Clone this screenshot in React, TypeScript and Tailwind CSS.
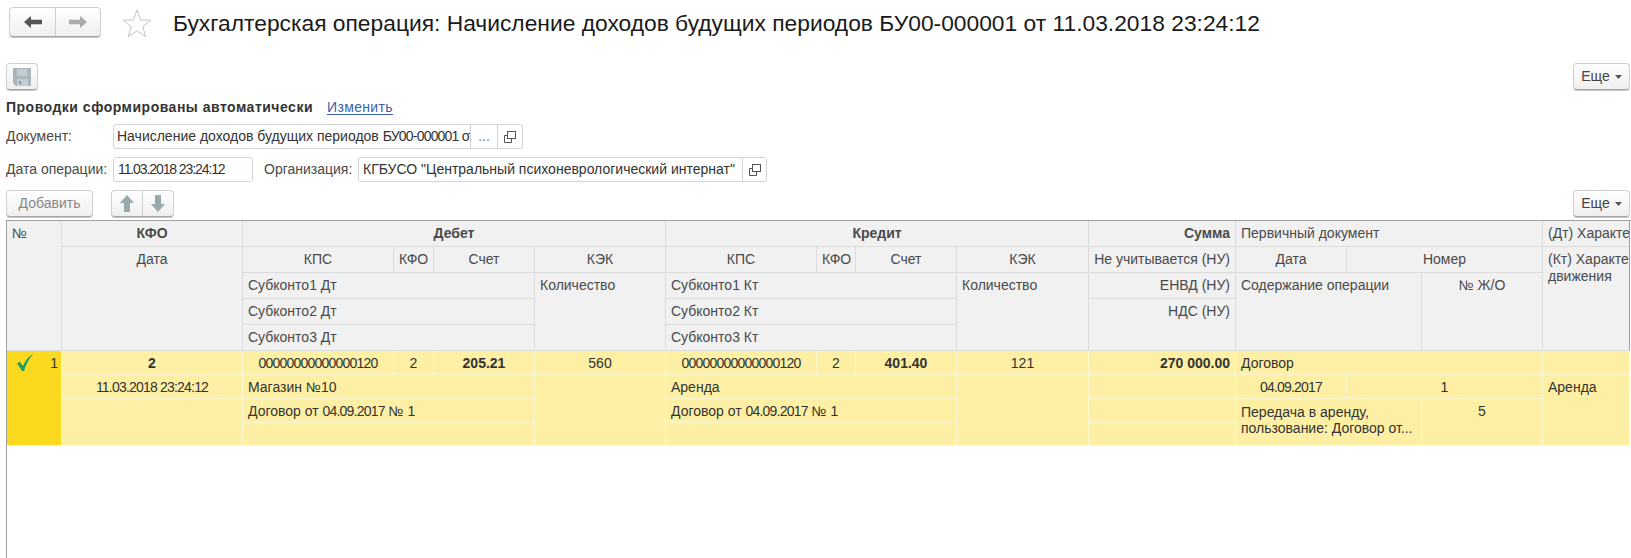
const btn = "bg-gradient-to-b from-white to-[#efefef] border border-[#d0d0d0] border-b-[#a8a8a8] rounded-[4px] shadow-[0_1px_0_#c4c4c4]";
const field = "h-[25px] bg-white border border-[#d4d4d4] rounded-[3px] flex items-center text-[#333] whitespace-nowrap overflow-hidden";
const digits = "tracking-[-0.8px]";

const Cell = ({ className, children }: { className: string; children?: React.ReactNode }) => (
  <div className={`bg-[#f1f1f1] border-r border-b border-[#dcdcdc] px-[5px] pt-[2px] leading-[20px] overflow-hidden whitespace-nowrap text-[#4a4a4a] ${className}`}>{children}</div>
);

const Data = ({ className, children }: { className: string; children?: React.ReactNode }) => (
  <div className={`bg-[#fdf0a4] border-r border-b border-[#fff8d2] px-[5px] pt-[2px] leading-[20px] overflow-hidden whitespace-nowrap text-[#333] ${className}`}>{children}</div>
);

const CopyIcon = () => (
  <svg width="14" height="14" viewBox="0 0 14 14" fill="none" stroke="#555" strokeWidth="1">
    <rect x="4.5" y="1.5" width="8" height="7" />
    <path d="M4.5 5.5H1.5V12.5H8.5V8.5" />
  </svg>
);

const Caret = () => (
  <svg width="7" height="4" viewBox="0 0 7 4"><path d="M0 0H7L3.5 4Z" fill="#555" /></svg>
);

const More = () => (
  <button className={`${btn} w-[57px] h-[27px] flex items-center justify-center gap-[5px] text-[14px] text-[#444]`}>
    Еще <Caret />
  </button>
);

export default function App() {
  return (
    <div className="h-[558px] w-[1631px] overflow-hidden bg-white flex flex-col font-['Liberation_Sans',Arial,sans-serif] text-[14px]">
      {/* Title bar */}
      <div className="h-[63px] shrink-0 flex items-start pt-[7px] pl-[9px]">
        <div className={`${btn} w-[92px] h-[30px] flex`}>
          <div className="w-[46px] border-r border-[#d0d0d0] flex items-center justify-center">
            <svg width="18" height="12" viewBox="0 0 18 12"><path d="M0 6L7 0V3.8H18V8.2H7V12Z" fill="#555" /></svg>
          </div>
          <div className="flex-1 flex items-center justify-center">
            <svg width="18" height="12" viewBox="0 0 18 12"><path d="M18 6L11 0V3.8H0V8.2H11V12Z" fill="#aaa" /></svg>
          </div>
        </div>
        <svg className="ml-[21px] mt-[2px]" width="30" height="29" viewBox="0 0 30 29" fill="#fff" stroke="#c4c4c4" strokeWidth="1">
          <path d="M15 1L18.6 10.9L29 11.2L20.8 17.6L23.7 27.7L15 21.8L6.3 27.7L9.2 17.6L1 11.2L11.4 10.9Z" />
        </svg>
        <div className="ml-[21px] text-[22.8px] leading-[32px] text-[#1a1a1a] whitespace-nowrap">
          Бухгалтерская операция: Начисление доходов будущих периодов БУ00-000001 от 11.03.2018 23:24:12
        </div>
      </div>

      {/* Command bar */}
      <div className="h-[27px] shrink-0 flex justify-between pl-[6px] pr-[1px]">
        <button className={`${btn} w-[32px] h-[27px] flex items-center justify-center`}>
          <svg width="20" height="20" viewBox="0 0 20 20">
            <path d="M1 1H19V19H4L1 16Z" fill="#a9b4bb" />
            <rect x="5" y="2" width="10" height="7" fill="#c3ccd2" />
            <rect x="5" y="12" width="11" height="7" fill="#c3ccd2" />
            <rect x="7" y="14" width="2" height="3" fill="#8a969e" />
          </svg>
        </button>
        <More />
      </div>

      {/* Auto postings */}
      <div className="h-[34px] shrink-0 pl-[6px] pt-[1px] flex items-center gap-[14px] text-[#333]">
        <span className="font-bold tracking-[0.5px]">Проводки сформированы автоматически</span>
        <span className="text-[#3a5fb0] underline underline-offset-2 tracking-[0.35px]">Изменить</span>
      </div>

      {/* Document */}
      <div className="shrink-0 pl-[6px] flex items-center h-[25px]">
        <span className="w-[107px] text-[#4a4a4a]">Документ:</span>
        <div className={`${field} w-[410px]`}>
          <span className="w-[356px] shrink-0 pl-[3px] overflow-hidden">Начисление доходов будущих периодов <span className={digits}>БУ00-000001 от 11.03.2018 23:24:12</span></span>
          <span className="w-[27px] h-full border-l border-[#d4d4d4] flex items-center justify-center text-[#777]">...</span>
          <span className="flex-1 h-full border-l border-[#d4d4d4] flex items-center justify-center"><CopyIcon /></span>
        </div>
      </div>

      {/* Date and organisation */}
      <div className="shrink-0 pl-[6px] mt-[8px] flex items-center h-[25px]">
        <span className="w-[107px] text-[#4a4a4a]">Дата операции:</span>
        <div className={`${field} w-[140px] pl-[4px] tracking-[-1.1px]`}>11.03.2018 23:24:12</div>
        <span className="ml-[11px] w-[94px] text-[#4a4a4a]">Организация:</span>
        <div className={`${field} w-[409px]`}>
          <span className="w-[383px] pl-[4px] overflow-hidden">КГБУСО "Центральный психоневрологический интернат"</span>
          <span className="flex-1 h-full border-l border-[#d4d4d4] flex items-center justify-center"><CopyIcon /></span>
        </div>
      </div>

      {/* Table command bar */}
      <div className="shrink-0 mt-[8px] h-[27px] flex pl-[6px] pr-[1px]">
        <button className={`${btn} w-[87px] h-[27px] text-[#888]`}>Добавить</button>
        <div className={`${btn} ml-[18px] w-[63px] h-[27px] flex`}>
          <div className="w-[31px] border-r border-[#d0d0d0] flex items-center justify-center">
            <svg width="14" height="17" viewBox="0 0 14 17"><path d="M7 0L14 8H10V17H4V8H0Z" fill="#9aa9ad" /></svg>
          </div>
          <div className="flex-1 flex items-center justify-center">
            <svg width="14" height="17" viewBox="0 0 14 17"><path d="M7 17L14 9H10V0H4V9H0Z" fill="#9aa9ad" /></svg>
          </div>
        </div>
        <div className="ml-auto"><More /></div>
      </div>

      {/* Table */}
      <div className="mt-[3px] ml-[6px] flex-1 border-l border-t border-[#a0a0a0] overflow-hidden">
        <div className="grid grid-cols-[55px_181px_151px_40px_101px_131px_151px_39px_101px_132px_147px_111px_75px_121px_87px] grid-rows-[26px_26px_26px_26px_26px_24px_24px_24px_23px]">
          <Cell className="col-[1/2] row-[1/6]">№</Cell>
          <Cell className="col-[2/3] row-[1/2] text-center font-bold">КФО</Cell>
          <Cell className="col-[3/7] row-[1/2] text-center font-bold">Дебет</Cell>
          <Cell className="col-[7/11] row-[1/2] text-center font-bold">Кредит</Cell>
          <Cell className="col-[11/12] row-[1/2] text-right font-bold">Сумма</Cell>
          <Cell className="col-[12/15] row-[1/2]">Первичный документ</Cell>
          <Cell className="col-[15/16] row-[1/2] border-r-[#a0a0a0]">(Дт) Характер движения</Cell>

          <Cell className="col-[2/3] row-[2/6] text-center">Дата</Cell>
          <Cell className="col-[3/4] row-[2/3] text-center">КПС</Cell>
          <Cell className="col-[4/5] row-[2/3] text-center">КФО</Cell>
          <Cell className="col-[5/6] row-[2/3] text-center">Счет</Cell>
          <Cell className="col-[6/7] row-[2/3] text-center">КЭК</Cell>
          <Cell className="col-[7/8] row-[2/3] text-center">КПС</Cell>
          <Cell className="col-[8/9] row-[2/3] text-center">КФО</Cell>
          <Cell className="col-[9/10] row-[2/3] text-center">Счет</Cell>
          <Cell className="col-[10/11] row-[2/3] text-center">КЭК</Cell>
          <Cell className="col-[11/12] row-[2/3] text-right">Не учитывается (НУ)</Cell>
          <Cell className="col-[12/13] row-[2/3] text-center">Дата</Cell>
          <Cell className="col-[13/15] row-[2/3] text-center">Номер</Cell>
          <Cell className="col-[15/16] row-[2/6] border-r-[#a0a0a0] !pt-[4px] !leading-[17px]">(Кт) Характер<br />движения</Cell>

          <Cell className="col-[3/6] row-[3/4]">Субконто1 Дт</Cell>
          <Cell className="col-[6/7] row-[3/6]">Количество</Cell>
          <Cell className="col-[7/10] row-[3/4]">Субконто1 Кт</Cell>
          <Cell className="col-[10/11] row-[3/6]">Количество</Cell>
          <Cell className="col-[11/12] row-[3/4] text-right">ЕНВД (НУ)</Cell>
          <Cell className="col-[12/14] row-[3/6]">Содержание операции</Cell>
          <Cell className="col-[14/15] row-[3/6] text-center">№ Ж/О</Cell>

          <Cell className="col-[3/6] row-[4/5]">Субконто2 Дт</Cell>
          <Cell className="col-[7/10] row-[4/5]">Субконто2 Кт</Cell>
          <Cell className="col-[11/12] row-[4/6] text-right">НДС (НУ)</Cell>
          <Cell className="col-[3/6] row-[5/6]">Субконто3 Дт</Cell>
          <Cell className="col-[7/10] row-[5/6]">Субконто3 Кт</Cell>

          <div className="col-[1/2] row-[6/10] bg-[#fbd91f] border-r border-b border-[#fff8d2] flex items-start justify-between pl-[9px] pr-[3px] pt-[2px] text-[#333]">
            <svg className="mt-[1px]" width="18" height="18" viewBox="0 0 18 18"><path d="M1 9L4 8L7 12C9 7 12 3 17 0C13 5 10 10 8 17H6Z" fill="#1f9d66" /></svg>
            <span className="leading-[20px]">1</span>
          </div>
          <Data className="col-[2/3] row-[6/7] text-center font-bold">2</Data>
          <Data className={`col-[3/4] row-[6/7] text-center ${digits}`}>00000000000000120</Data>
          <Data className="col-[4/5] row-[6/7] text-center">2</Data>
          <Data className="col-[5/6] row-[6/7] text-center font-bold">205.21</Data>
          <Data className="col-[6/7] row-[6/7] text-center">560</Data>
          <Data className={`col-[7/8] row-[6/7] text-center ${digits}`}>00000000000000120</Data>
          <Data className="col-[8/9] row-[6/7] text-center">2</Data>
          <Data className="col-[9/10] row-[6/7] text-center font-bold">401.40</Data>
          <Data className="col-[10/11] row-[6/7] text-center">121</Data>
          <Data className="col-[11/12] row-[6/7] text-right font-bold">270 000.00</Data>
          <Data className="col-[12/15] row-[6/7]">Договор</Data>
          <Data className="col-[15/16] row-[6/7]" />

          <Data className={`col-[2/3] row-[7/8] text-center ${digits}`}>11.03.2018 23:24:12</Data>
          <Data className="col-[2/3] row-[8/10]" />
          <Data className="col-[3/6] row-[7/8]">Магазин №10</Data>
          <Data className="col-[3/6] row-[8/9]">Договор от <span className={digits}>04.09.2017</span> № 1</Data>
          <Data className="col-[3/6] row-[9/10]" />
          <Data className="col-[6/7] row-[7/10]" />
          <Data className="col-[7/10] row-[7/8]">Аренда</Data>
          <Data className="col-[7/10] row-[8/9]">Договор от <span className={digits}>04.09.2017</span> № 1</Data>
          <Data className="col-[7/10] row-[9/10]" />
          <Data className="col-[10/11] row-[7/10]" />
          <Data className="col-[11/12] row-[7/8]" />
          <Data className="col-[11/12] row-[8/9]" />
          <Data className="col-[11/12] row-[9/10]" />
          <Data className={`col-[12/13] row-[7/8] text-center ${digits}`}>04.09.2017</Data>
          <Data className="col-[13/15] row-[7/8] text-center">1</Data>
          <Data className="col-[15/16] row-[7/10]">Аренда</Data>
          <Data className="col-[12/14] row-[8/10] !pt-[5px] !leading-[16px]">Передача в аренду,<br />пользование: Договор от...</Data>
          <Data className="col-[14/15] row-[8/10] text-center">5</Data>
        </div>
      </div>
    </div>
  );
}
